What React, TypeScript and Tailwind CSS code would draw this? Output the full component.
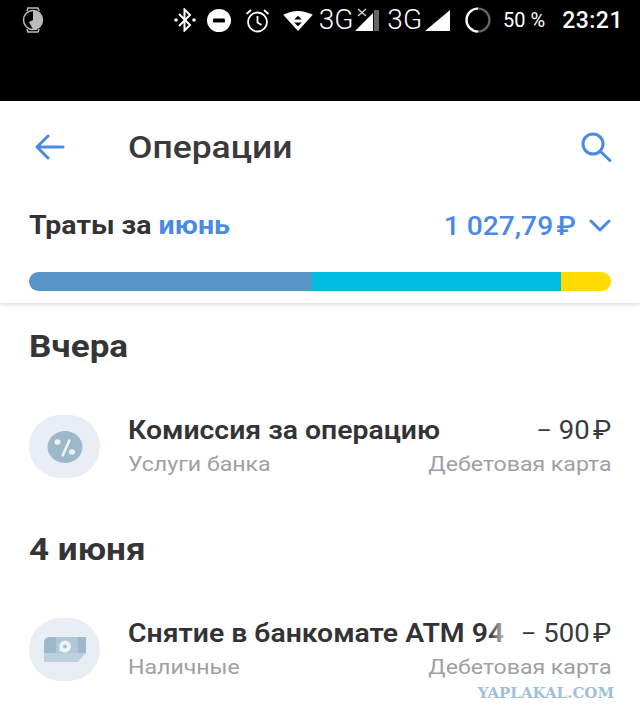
import React from "react";

type Operation = {
	title: string;
	category: string;
	amount: string;
	icon: React.ReactNode;
};

const BLUE = "#4a8ae6";

const PercentIcon = () => (
	<svg width="36" height="32" viewBox="0 0 36 32">
		<ellipse cx="18" cy="16" rx="17.500" ry="16" fill="#9db8c9" />
		<ellipse cx="10.500" cy="11" rx="3" ry="2.700" fill="#eef3f7" />
		<ellipse cx="25" cy="21" rx="3" ry="2.700" fill="#eef3f7" />
		<path d="M22.300 9.500 15.700 24.500" stroke="#eef3f7" strokeWidth="2.600" strokeLinecap="round" />
	</svg>
);

const CashIcon = () => (
	<svg width="42" height="25" viewBox="0 0 42 25">
		<path d="M6 0h36v16l-8 9H0V6Q0 0 6 0z" fill="#bcd0dd" />
		<path d="M6 0h36v16H0V6Q0 0 6 0z" fill="#9db8c9" />
		<rect x="12" y="0" width="22" height="16" fill="#b0c8d6" />
		<path d="M21 3.500a6 6 0 1 1-4.500 10L15 15l.700-3.500A6 6 0 0 1 21 3.500z" fill="#eef3f7" />
		<circle cx="21" cy="9.500" r="2" fill="#a8c1d0" />
	</svg>
);

const operations: { date: string; items: Operation[] }[] = [
	{
		date: "Вчера",
		items: [{ title: "Комиссия за операцию", category: "Услуги банка", amount: "− 90", icon: <PercentIcon /> }],
	},
	{
		date: "4 июня",
		items: [{ title: "Снятие в банкомате ATM 94", category: "Наличные", amount: "− 500", icon: <CashIcon /> }],
	},
];

const Signal = ({ crossed }: { crossed?: boolean }) => (
	<svg width="25" height="24" viewBox="0 0 25 24">
		<path d={crossed ? "M0 23 18 5v18z" : "M0 23 25 2v21z"} fill="#fff" />
		{crossed && <path d="M19 2h5v21h-5z" fill="#666" />}
		{crossed && <path d="M3 1l8 7M11 1 3 8" stroke="#ddd" strokeWidth="1.300" />}
	</svg>
);

const StatusBar = () => (
	<div className="h-[101px] bg-black text-white">
		<div className="flex h-[40px] items-center pr-[17px] pl-[22px]">
			<svg width="22" height="26" viewBox="0 0 22 26" fill="none">
				<path d="M5 4 6 1h10l1 3M5 22l1 3h10l1-3" stroke="#bbb" strokeWidth="1.500" />
				<circle cx="11" cy="13" r="9.500" stroke="#bbb" strokeWidth="1.500" />
				<path d="M11 3.500a9.500 9.500 0 0 1 0 19L7 15l4-2z" fill="#bbb" />
			</svg>
			<svg className="ml-auto" width="22" height="24" viewBox="0 0 22 24" fill="none" stroke="#fff" strokeWidth="2">
				<path d="M5 6l11 11-5.500 5.500v-21L16 7 5 18" />
				<circle cx="2" cy="12" r="0.800" fill="#fff" />
				<circle cx="20" cy="12" r="0.800" fill="#fff" />
			</svg>
			<svg className="ml-[11px]" width="24" height="23" viewBox="0 0 24 23">
				<ellipse cx="12" cy="11.500" rx="12" ry="11.500" fill="#fff" />
				<rect x="6" y="9.500" width="12" height="4" rx="1" fill="#000" />
			</svg>
			<svg className="ml-[14px]" width="25" height="25" viewBox="0 0 25 25" fill="none" stroke="#fff" strokeWidth="1.800">
				<circle cx="12.500" cy="14" r="9.500" />
				<path d="M12.500 8v6.500l4 2.500M1.500 6 6 2M23.500 6 19 2" />
			</svg>
			<svg className="ml-[13px]" width="30" height="21" viewBox="0 0 31 22">
				<path d="M0 5Q15.500-3 31 5L15.500 22z" fill="#fff" />
				<path d="M15.500 6l4 4h-8zM15.500 17l4-4h-8z" fill="#000" />
			</svg>
			<span className="ml-[6px] text-[28px] leading-none font-light">3G</span>
			<span className="ml-[2px]">
				<Signal crossed />
			</span>
			<span className="ml-[7px] text-[28px] leading-none font-light">3G</span>
			<span className="ml-[3px]">
				<Signal />
			</span>
			<svg className="ml-[15px]" width="26" height="26" viewBox="0 0 26 26" fill="none" strokeWidth="2.200">
				<circle cx="13" cy="13" r="11.500" stroke="#666" />
				<path d="M13 24.500A11.500 11.500 0 0 1 13 1.500" stroke="#fff" />
			</svg>
			<span className="ml-[12px] text-[20px] leading-none">50 %</span>
			<span className="ml-[17px] text-[23px] leading-none font-medium tracking-[0.5px]">23:21</span>
		</div>
	</div>
);

const App = () => {
	return (
		<div className="relative h-[723px] w-[640px] overflow-hidden bg-white font-['Roboto',sans-serif]">
			<StatusBar />
			<div className="relative h-[202px] px-[29px] shadow-[0_1px_5px_rgba(0,0,0,0.18)]">
				<div className="flex h-[92px] items-center">
					<svg className="ml-[6px]" width="30" height="26" viewBox="0 0 30 26" fill="none" stroke={BLUE} strokeWidth="3" strokeLinecap="round" strokeLinejoin="round">
						<path d="M28 13H3M13 2 2 13l11 11" />
					</svg>
					<h1 className="ml-[63px] origin-left scale-x-[1.108] text-[32px] leading-none font-medium text-[#3a3a3c]">Операции</h1>
					<svg className="mr-[-1px] ml-auto" width="31" height="30" viewBox="0 0 31 30" fill="none" stroke={BLUE} strokeWidth="3" strokeLinecap="round">
						<circle cx="12" cy="12" r="10" />
						<path d="M19.500 19.500 29 28.500" />
					</svg>
				</div>
				<div className="mt-[18px] flex items-center justify-between">
					<div className="origin-left scale-x-[1.14] text-[25px] leading-[30px] font-bold text-[#333335]">
						Траты за <span style={{ color: BLUE }}>июнь</span>
					</div>
					<div className="flex items-center text-[26px] leading-[30px] font-medium" style={{ color: BLUE }}>
						<span className="origin-right scale-x-[1.085]">
							1 027,79<span className="ml-[3px]">₽</span>
						</span>
						<svg className="ml-[13px]" width="22" height="14" viewBox="0 0 22 14" fill="none" stroke={BLUE} strokeWidth="3" strokeLinecap="round" strokeLinejoin="round">
							<path d="M2 2l9 9 9-9" />
						</svg>
					</div>
				</div>
				<div className="mt-[31px] flex h-[19px] overflow-hidden rounded-full">
					<div className="w-[283px] bg-[#5796c4]" />
					<div className="w-[249px] bg-[#00bbe0]" />
					<div className="flex-1 bg-[#ffdc00]" />
				</div>
			</div>
			<div className="px-[29px]">
				{operations.map((group) => (
					<section key={group.date} className="h-[203px] pt-[25px]">
						<h2 className="origin-left scale-x-[1.13] text-[31px] leading-[38px] font-bold text-[#353537]">{group.date}</h2>
						{group.items.map((item) => (
							<div key={item.title} className="mt-[49px] flex items-center">
								<div className="flex h-[63px] w-[71px] shrink-0 items-center justify-center rounded-full bg-[#e8eef4]">
									{item.icon}
								</div>
								<div className="ml-[28px] min-w-0 flex-1">
									<div className="relative flex items-center justify-between text-[25px] leading-[30px]">
										<span className="origin-left scale-x-[1.135] font-semibold whitespace-nowrap text-[#333335]">{item.title}</span>
										<span className="absolute top-0 right-0 z-10 bg-gradient-to-r from-transparent via-white via-[18%] to-white pl-[40px] text-[#3a3a3c]">
											<span className="inline-block origin-right scale-x-[1.1] whitespace-nowrap">
												{item.amount}
												<span className="ml-[3px]">₽</span>
											</span>
										</span>
									</div>
									<div className="mt-[4px] flex justify-between text-[21px] leading-[28px] text-[#9da1a6]">
										<span className="origin-left scale-x-[1.1]">{item.category}</span>
										<span className="origin-right scale-x-[1.1]">Дебетовая карта</span>
									</div>
								</div>
							</div>
						))}
					</section>
				))}
			</div>
			<div className="absolute top-[686px] right-[26px] font-['DejaVu_Serif',serif] text-[15px] leading-none font-bold text-[#9fc0d8]">
				YAPLAKAL.COM
			</div>
		</div>
	);
};

export default App;
